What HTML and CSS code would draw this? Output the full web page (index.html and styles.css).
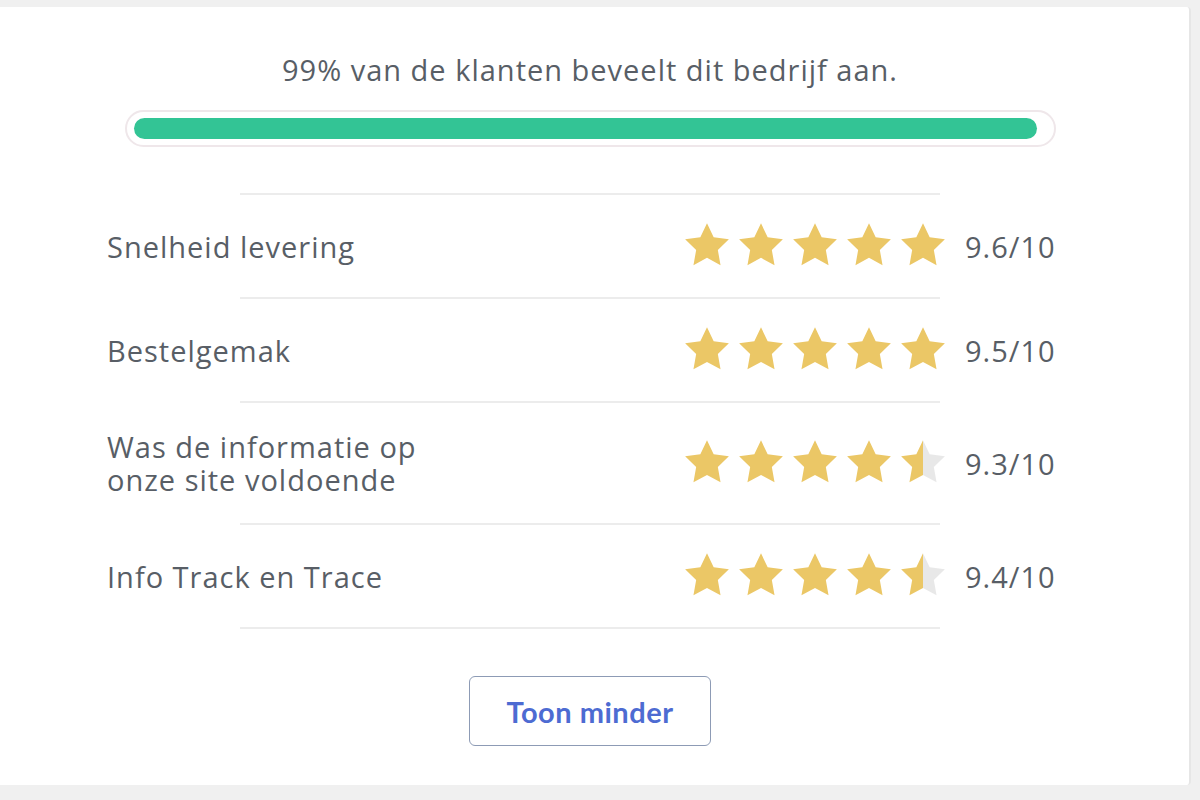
FILE: index.html
```html
<!DOCTYPE html>
<html lang="nl">
<head>
  <meta charset="UTF-8" />
  <meta name="viewport" content="width=device-width, initial-scale=1.0"/>
  <title>Klantbeoordelingen</title>
  <link rel="stylesheet" href="styles.css">
</head>
<body>
  <svg width="0" height="0" class="defs">
    <defs>
      <symbol id="star" viewBox="0 0 24 23">
        <path d="M12 0.6l3.2 6.7 7.3 1-5.3 5.1 1.3 7.3L12 17.2l-6.5 3.5 1.3-7.3L1.5 8.3l7.3-1z"/>
      </symbol>
      <linearGradient id="half">
        <stop offset="50%" stop-color="#ebc766"/>
        <stop offset="50%" stop-color="#e8e8e8"/>
      </linearGradient>
    </defs>
  </svg>

  <div class="card">
    <div class="inner">
      <p class="headline">99% van de klanten beveelt dit bedrijf aan.</p>

      <div class="progress">
        <div class="progress-fill" style="width: 99%"></div>
      </div>

      <div class="list">
        <div class="rule"></div>
        <div class="row">
          <span class="label">Snelheid levering</span>
          <span class="stars">
            <svg><use href="#star"/></svg><svg><use href="#star"/></svg><svg><use href="#star"/></svg><svg><use href="#star"/></svg><svg><use href="#star"/></svg>
          </span>
          <span class="score">9.6/10</span>
        </div>
        <div class="rule"></div>
        <div class="row">
          <span class="label">Bestelgemak</span>
          <span class="stars">
            <svg><use href="#star"/></svg><svg><use href="#star"/></svg><svg><use href="#star"/></svg><svg><use href="#star"/></svg><svg><use href="#star"/></svg>
          </span>
          <span class="score">9.5/10</span>
        </div>
        <div class="rule"></div>
        <div class="row">
          <span class="label">Was de informatie op<br>onze site voldoende</span>
          <span class="stars">
            <svg><use href="#star"/></svg><svg><use href="#star"/></svg><svg><use href="#star"/></svg><svg><use href="#star"/></svg><svg class="part"><use href="#star"/></svg>
          </span>
          <span class="score">9.3/10</span>
        </div>
        <div class="rule"></div>
        <div class="row">
          <span class="label">Info Track en Trace</span>
          <span class="stars">
            <svg><use href="#star"/></svg><svg><use href="#star"/></svg><svg><use href="#star"/></svg><svg><use href="#star"/></svg><svg class="part"><use href="#star"/></svg>
          </span>
          <span class="score">9.4/10</span>
        </div>
        <div class="rule"></div>
      </div>

      <button class="toggle">Toon minder</button>
    </div>
  </div>
</body>
</html>
```

FILE: styles.css
```css
body {
  margin: 0;
  padding: 7px 0 15px;
  background-color: #f0f0f0;
  font-family: "Open Sans", "Liberation Sans", sans-serif;
  color: #585e66;
}

.defs {
  position: absolute;
}

.card {
  width: 1191px;
  box-sizing: border-box;
  background-color: #fff;
  border-right: 2px solid #e6e6e6;
  border-radius: 0 4px 4px 0;
  padding: 45px 0 39px;
}

.inner {
  width: 1180px;
  display: flex;
  flex-direction: column;
  align-items: center;
}

.headline {
  margin: 0;
  font-size: 29px;
  letter-spacing: 1px;
  line-height: 36px;
}

.progress {
  width: 931px;
  box-sizing: border-box;
  margin-top: 22px;
  padding: 6px 7px;
  border: 2px solid #efe7ea;
  border-radius: 19px;
}

.progress-fill {
  height: 21px;
  background-color: #33c495;
  border-radius: 11px;
}

.list {
  width: 950px;
  margin-top: 46px;
  margin-left: -16px;
}

.rule {
  width: 700px;
  height: 2px;
  margin-left: 133px;
  background-color: #ececec;
}

.row {
  display: grid;
  grid-template-columns: 1fr auto auto;
  align-items: center;
  column-gap: 17px;
  min-height: 102px;
  padding: 27px 0;
  box-sizing: border-box;
  font-size: 29px;
  letter-spacing: 1px;
  line-height: 33px;
}

.stars {
  display: flex;
  gap: 4px;
}

.stars svg {
  width: 50px;
  height: 48px;
  fill: #ebc766;
}

.stars svg.part {
  fill: url(#half);
}

.score {
  width: 92px;
}

.toggle {
  margin-top: 47px;
  width: 242px;
  height: 70px;
  background-color: #fff;
  border: 1.5px solid #8d9bb5;
  border-radius: 6px;
  font-family: "Lato", "Noto Sans", sans-serif;
  font-weight: 700;
  font-size: 29px;
  letter-spacing: 0.5px;
  color: #4d6bd2;
  cursor: pointer;
}
```
